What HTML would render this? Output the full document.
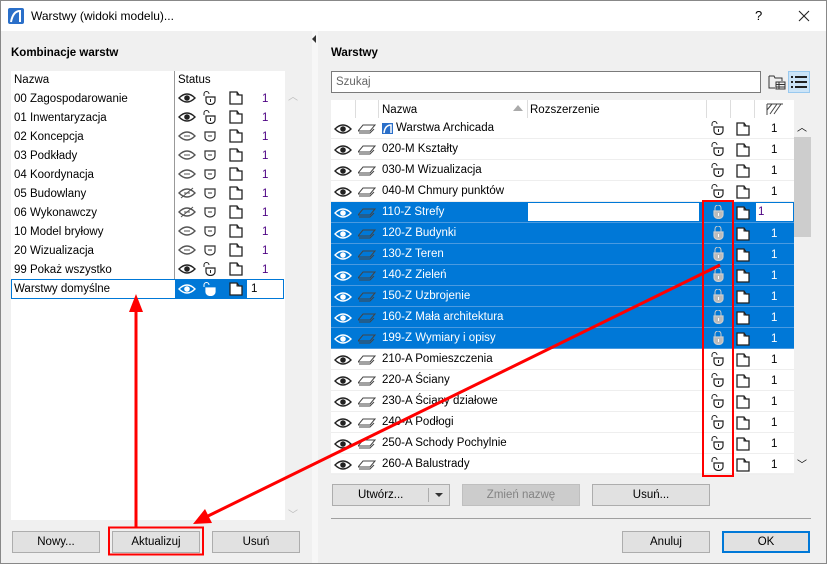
<!DOCTYPE html>
<html><head><meta charset="utf-8">
<style>
*{box-sizing:border-box;margin:0;padding:0}
body{width:827px;height:564px;overflow:hidden;font-family:"Liberation Sans",sans-serif;font-size:11.5px;color:#000;background:#f0f0f0;position:relative}
.abs{position:absolute}
.win{position:absolute;left:0;top:0;width:827px;height:564px;border:1px solid #888;}
.title{position:absolute;left:1px;top:1px;width:825px;height:30px;background:#fff}
.btn{position:absolute;height:22px;background:#e1e1e1;border:1px solid #adadad;text-align:center;line-height:20px;font-size:11.5px}
.row{position:absolute;white-space:nowrap}
.lrow{height:19px;line-height:20px}
.rrow{height:21px;line-height:20px;border-bottom:1px solid #eee}
.sel{background:#0078d7;color:#fff;border-bottom:1px solid #4a9ae0}
svg.i{position:absolute}
</style></head><body>
<div class="win"></div>
<div class="title">
 <svg class="i" style="left:7px;top:7px" width="16" height="16"><rect width="16" height="16" rx="2" fill="#2a6fc9"/><path d="M3 14 Q5 3 12 3 L12 14" stroke="#fff" stroke-width="2" fill="none"/></svg>
 <div class="abs" style="left:30px;top:8px;font-size:12px">Warstwy (widoki modelu)...</div>
 <div class="abs" style="left:754px;top:7px;font-size:13px">?</div>
 <svg class="i" style="left:797px;top:9px" width="12" height="12"><path d="M1 1L11 11M11 1L1 11" stroke="#222" stroke-width="1.1"/></svg>
</div>
<div class="abs" style="left:312px;top:31px;width:6px;height:532px;background:#f7f7f7"></div>
<div class="abs" style="left:312px;top:35px;width:0;height:0;border-top:4px solid transparent;border-bottom:4px solid transparent;border-right:4px solid #333"></div>
<div class="abs" style="left:11px;top:47px;font-weight:bold;font-size:11.5px">Kombinacje warstw</div>
<div class="abs" style="left:331px;top:47px;font-weight:bold;font-size:11.5px">Warstwy</div>

<div class="abs" style="left:11px;top:71px;width:274px;height:449px;background:#fff"></div>
<div class="abs" style="left:285px;top:89px;width:15px;height:431px;background:#f0f0f0"></div>
<div class="abs" style="left:288px;top:88px;color:#bbb;font-size:10px">︿</div>
<div class="abs" style="left:288px;top:506px;color:#bbb;font-size:10px">﹀</div>
<div class="abs" style="left:14px;top:74px">Nazwa</div>
<div class="abs" style="left:174px;top:71px;width:1px;height:209px;background:#999"></div>
<div class="abs" style="left:178px;top:74px">Status</div>
<div id="left"></div>

<div class="abs" style="left:331px;top:71px;width:430px;height:22px;background:#fff;border:1px solid #7a7a7a;padding:4px 4px;color:#666">Szukaj</div>
<svg class="i" style="left:768px;top:73px" width="18" height="18"><path d="M1 3h5l1 2h7v3M1 3v12h6" stroke="#333" fill="none"/><rect x="8" y="9" width="9" height="7" fill="none" stroke="#333"/><path d="M8 11.5h9M8 14h9M11 9v7" stroke="#333"/></svg>
<div class="abs" style="left:788px;top:71px;width:22px;height:22px;background:#cce4f7;border:1px solid #99c9ef"></div>
<svg class="i" style="left:791px;top:75px" width="16" height="14"><path d="M0 2h2M4 2h12M0 7h2M4 7h12M0 12h2M4 12h12" stroke="#222" stroke-width="2"/></svg>
<div class="abs" style="left:331px;top:100px;width:463px;height:373px;background:#fff"></div>
<div class="abs" style="left:794px;top:118px;width:17px;height:355px;background:#f0f0f0"></div>
<div class="abs" style="left:794px;top:137px;width:17px;height:100px;background:#cdcdcd"></div>
<div class="abs" style="left:797px;top:119px;font-size:10px">︿</div>
<div class="abs" style="left:797px;top:456px;font-size:10px">﹀</div>
<div class="abs" style="left:355px;top:100px;width:1px;height:18px;background:#ddd"></div>
<div class="abs" style="left:378px;top:100px;width:1px;height:18px;background:#ddd"></div>
<div class="abs" style="left:527px;top:100px;width:1px;height:18px;background:#ddd"></div>
<div class="abs" style="left:706px;top:100px;width:1px;height:18px;background:#ddd"></div>
<div class="abs" style="left:730px;top:100px;width:1px;height:18px;background:#ddd"></div>
<div class="abs" style="left:754px;top:100px;width:1px;height:18px;background:#ddd"></div>
<div class="abs" style="left:382px;top:104px">Nazwa</div>
<div class="abs" style="left:513px;top:105px;width:0;height:0;border-left:5px solid transparent;border-right:5px solid transparent;border-bottom:6px solid #aaa"></div>
<div class="abs" style="left:530px;top:104px">Rozszerzenie</div>
<svg class="i" style="left:766px;top:103px" width="18" height="12"><path d="M1 1h16M1 1v11M4 11l7-10M1 7l5-6M8 11l7-10" stroke="#444" fill="none"/></svg>
<div id="right"></div>

<div class="btn" style="left:332px;top:484px;width:118px;text-align:left;padding-left:25px">Utwórz...<span class="abs" style="left:95px;top:3px;width:1px;height:14px;background:#adadad"></span><span class="abs" style="left:102px;top:8px;border-left:4px solid transparent;border-right:4px solid transparent;border-top:4px solid #333"></span></div>
<div class="btn" style="left:462px;top:484px;width:118px;background:#ccc;border-color:#bfbfbf;color:#838383">Zmień nazwę</div>
<div class="btn" style="left:592px;top:484px;width:118px">Usuń...</div>
<div class="abs" style="left:331px;top:518px;width:480px;height:1px;background:#a0a0a0"></div>
<div class="btn" style="left:622px;top:531px;width:88px">Anuluj</div>
<div class="btn" style="left:722px;top:531px;width:88px;border:2px solid #0078d7;line-height:18px">OK</div>
<div class="btn" style="left:12px;top:531px;width:88px">Nowy...</div>
<div class="btn" style="left:112px;top:531px;width:88px">Aktualizuj</div>
<div class="btn" style="left:212px;top:531px;width:88px">Usuń</div>

<svg class="i" style="left:0;top:0" width="827" height="564">
<rect x="109" y="527.5" width="94" height="27" fill="none" stroke="#f00" stroke-width="2"/>
<rect x="703" y="201" width="30" height="275" fill="none" stroke="#f00" stroke-width="2"/>
<path d="M136 527V310" stroke="#f00" stroke-width="3"/>
<path d="M136 294l-7 18h14z" fill="#f00"/>
<path d="M720 265L208 516" stroke="#f00" stroke-width="3"/>
<path d="M193 524l12-15 7 14z" fill="#f00"/>
</svg>

<script>
function eye(c,dim,off){var s=dim?'#555':c;return '<svg width="18" height="12" style="vertical-align:middle"><path d="M1 6Q9 -2 17 6Q9 14 1 6Z" fill="none" stroke="'+s+'" stroke-width="1.4"/>'+(dim?'<path d="M6 6h6" stroke="#555"/>':'<circle cx="9" cy="6" r="2.8" fill="'+c+'"/>')+(off?'<path d="M3 11L15 1" stroke="#555"/>':'')+'</svg>';}
function lock(c,open,fill){var p=open?'<path d="M1 5V3a2.5 2.5 0 0 1 5 0" fill="none" stroke="'+c+'"/>':'<path d="M4 6V3a3 3 0 0 1 6 0v3" fill="none" stroke="'+c+'"/>';return '<svg width="14" height="14" style="vertical-align:middle">'+p+'<path d="M3 6h9v4a4.5 3.5 0 0 1-9 0z" fill="'+(fill||'none')+'" stroke="'+c+'" stroke-width="1.2"/><path d="M7.5 8v3" stroke="'+(fill?'#fff':c)+'"/></svg>';}
function fold(c,bg){return '<svg width="14" height="14" style="vertical-align:middle"><path d="M1 1h7l2 3h3v9H1z" fill="'+(bg||'none')+'" stroke="'+c+'" stroke-width="1.3"/><path d="M8 1v3h5" fill="none" stroke="'+c+'"/></svg>';}
function lay(c){return '<svg width="18" height="10" style="vertical-align:middle"><path d="M5 1h12l-5 6H0z" fill="none" stroke="'+c+'"/><path d="M1 9h11l4-4" fill="none" stroke="'+c+'"/></svg>';}
var L=[["00 Zagospodarowanie",0,1],["01 Inwentaryzacja",0,1],["02 Koncepcja",1,0],["03 Podkłady",1,0],["04 Koordynacja",1,0],["05 Budowlany",2,0],["06 Wykonawczy",2,0],["10 Model bryłowy",1,0],["20 Wizualizacja",1,0],["99 Pokaż wszystko",0,1]];
var h='';
L.forEach(function(r,i){var y=89+i*19;
h+='<div class="row lrow" style="left:14px;top:'+y+'px">'+r[0]+'</div>';
h+='<div class="abs" style="left:178px;top:'+(y+3)+'px">'+eye('#222',r[1]>0,r[1]==2)+'</div>';
h+='<div class="abs" style="left:203px;top:'+(y+2)+'px">'+(r[2]?lock('#222',1):'<svg width="14" height="14"><path d="M2 3h10v5a5 4 0 0 1-10 0z" fill="none" stroke="#333" stroke-width="1.2"/><path d="M5 7h4" stroke="#333"/></svg>')+'</div>';
h+='<div class="abs" style="left:229px;top:'+(y+2)+'px">'+fold('#222')+'</div>';
h+='<div class="abs" style="left:262px;top:'+(y+4)+'px;color:#4b0082">1</div>';});
var y=279;
h+='<div class="abs" style="left:11px;top:'+y+'px;width:273px;height:20px;border:1px solid #0078d7;background:#fff"></div>';
h+='<div class="abs" style="left:175px;top:'+(y+1)+'px;width:72px;height:18px;background:#0078d7"></div>';
h+='<div class="row" style="left:14px;top:'+(y+4)+'px">Warstwy domyślne</div>';
h+='<div class="abs" style="left:178px;top:'+(y+4)+'px">'+eye('#fff')+'</div>';
h+='<div class="abs" style="left:203px;top:'+(y+3)+'px">'+lock('#fff',1,'#fff')+'</div>';
h+='<div class="abs" style="left:229px;top:'+(y+3)+'px">'+fold('#222','#fff')+'</div>';
h+='<div class="abs" style="left:251px;top:'+(y+4)+'px">1</div>';
document.getElementById('left').innerHTML=h;
var R=["Warstwa Archicada","020-M Kształty","030-M Wizualizacja","040-M Chmury punktów","110-Z Strefy","120-Z Budynki","130-Z Teren","140-Z Zieleń","150-Z Uzbrojenie","160-Z Mała architektura","199-Z Wymiary i opisy","210-A Pomieszczenia","220-A Ściany","230-A Ściany działowe","240-A Podłogi","250-A Schody Pochylnie","260-A Balustrady"];
h='';
R.forEach(function(n,i){var y=118+i*21,s=i>=4&&i<=10,c=s?'#fff':'#222';
h+='<div class="row rrow'+(s?' sel':'')+'" style="left:331px;top:'+y+'px;width:463px"></div>';
h+='<div class="abs" style="left:334px;top:'+(y+5)+'px">'+eye(c)+'</div>';
h+='<div class="abs" style="left:358px;top:'+(y+5)+'px">'+lay('#444')+'</div>';
h+='<div class="abs" style="left:'+(i==0?396:382)+'px;top:'+(y+4)+'px;color:'+(s?'#fff':'#000')+'">'+n+'</div>';
if(i==0)h+='<svg class="i" style="left:382px;top:'+(y+5)+'px" width="11" height="11"><rect width="11" height="11" fill="#2a6fc9"/><path d="M2 10Q3 2 9 2V10" stroke="#fff" stroke-width="1.5" fill="none"/></svg>';
h+='<div class="abs" style="left:711px;top:'+(y+3)+'px">'+(s?lock('#ccc',0,'#bbb'):lock('#222',1))+'</div>';
h+='<div class="abs" style="left:736px;top:'+(y+4)+'px">'+fold('#222',s?'#fff':'')+'</div>';
if(i==4){h+='<div class="abs" style="left:528px;top:'+(y+1)+'px;width:171px;height:18px;background:#fff"></div><div class="abs" style="left:756px;top:'+(y+1)+'px;width:37px;height:18px;background:#fff;padding:3px 2px;color:#4b0082">1</div>';}
else h+='<div class="abs" style="left:771px;top:'+(y+5)+'px;color:'+(s?'#fff':'#000')+'">1</div>';});
document.getElementById('right').innerHTML=h;
</script>
</body></html>
